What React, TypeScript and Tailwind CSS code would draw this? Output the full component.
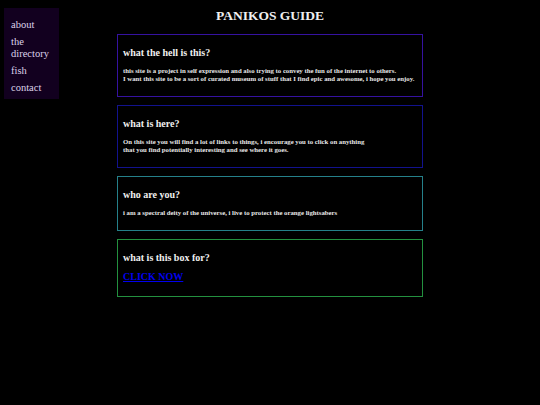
import React from "react";

const boxes = [
  {
    title: "what the hell is this?",
    border: "border-[#3512a0]",
    lines: [
      "this site is a project in self expression and also trying to convey the fun of the internet to others.",
      "I want this site to be a sort of curated museum of stuff that I find epic and awesome, i hope you enjoy.",
    ],
  },
  {
    title: "what is here?",
    border: "border-[#12128e]",
    lines: [
      "On this site you will find a lot of links to things, i encourage you to click on anything",
      "that you find potentially interesting and see where it goes.",
    ],
  },
  {
    title: "who are you?",
    border: "border-[#25808a]",
    lines: ["i am a spectral deity of the universe, i live to protect the orange lightsabers"],
  },
];

export default function App() {
  return (
    <div
      className="min-h-[405px] w-full bg-black text-[#f0f0f0]"
      style={{ fontFamily: '"Liberation Serif", "Times New Roman", serif' }}
    >
      <div className="grid grid-cols-[1fr_306px_1fr] pt-[8px]">
        <div>
          <nav className="ml-[4px] w-[55px] bg-[#12001f] pl-[7px] pr-[4px] pt-[11px] pb-[5px] text-[10.5px] leading-[12px] text-[#ddd2ea] flex flex-col gap-[5px]">
            <span>about</span>
            <span>the directory</span>
            <span>fish</span>
            <span>contact</span>
          </nav>
        </div>
        <main className="flex flex-col">
          <h1 className="text-center text-[13.5px] font-bold leading-[16px] mb-[10px]">PANIKOS GUIDE</h1>
          <div className="flex flex-col gap-[8px]">
            {boxes.map((b) => (
              <section key={b.title} className={`border ${b.border} pl-[5px] pt-[12px] pb-[13px]`}>
                <h2 className="text-[10px] font-bold leading-[12px]">{b.title}</h2>
                <p className="mt-[8px] text-[6.75px] font-bold leading-[8px] text-[#e8e8e8] whitespace-nowrap">
                  {b.lines.map((l, i) => (
                    <React.Fragment key={i}>
                      {l}
                      {i < b.lines.length - 1 && <br />}
                    </React.Fragment>
                  ))}
                </p>
              </section>
            ))}
            <section className="border border-[#23903f] pl-[5px] pt-[12px] pb-[13px]">
              <h2 className="text-[10px] font-bold leading-[12px]">what is this box for?</h2>
              <a href="#" className="mt-[7px] block text-[10px] font-bold leading-[12px] text-[#0000ee] underline">
                CLICK NOW
              </a>
            </section>
          </div>
        </main>
        <div />
      </div>
    </div>
  );
}
